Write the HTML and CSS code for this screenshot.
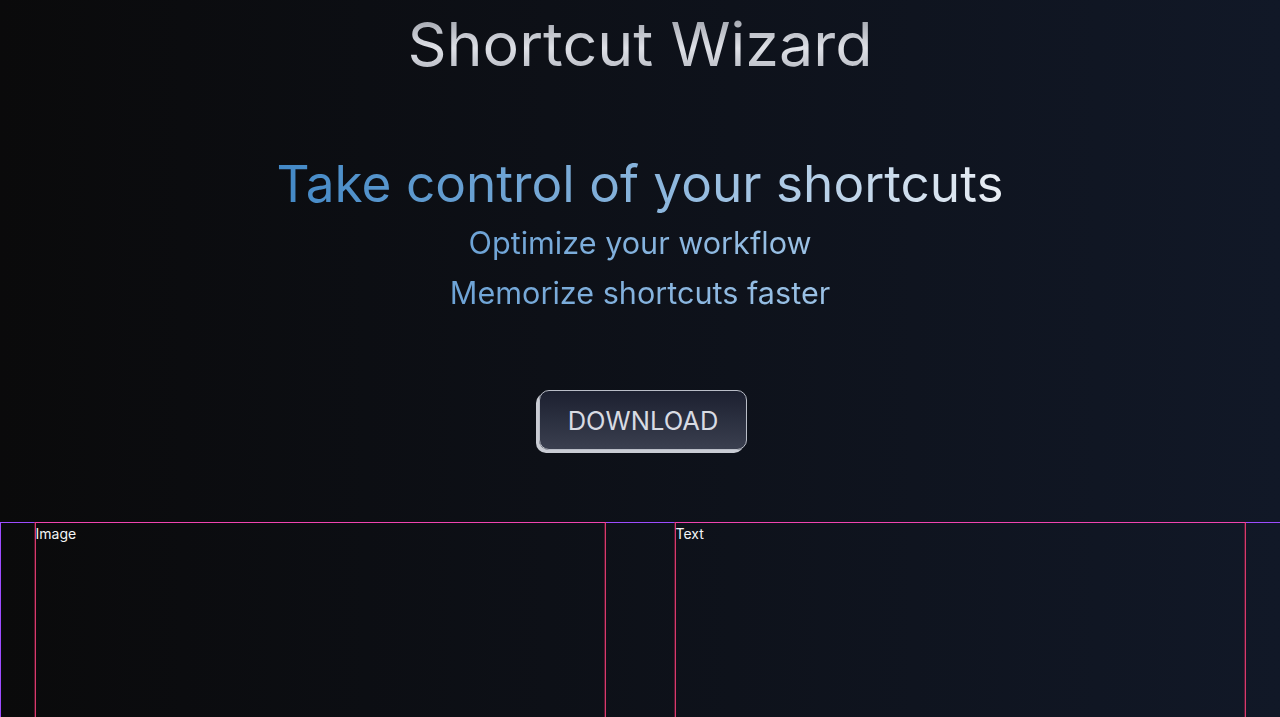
FILE: index.html
```html
<!DOCTYPE html>
<html lang="en">
<head>
<meta charset="utf-8">
<title>Shortcut Wizard</title>
<link rel="stylesheet" href="styles.css">
</head>
<body>
<main class="page">
  <header class="hero">
    <h1 class="title">Shortcut Wizard</h1>
    <h2 class="tagline">Take control of your shortcuts</h2>
    <p class="sub">Optimize your workflow</p>
    <p class="sub">Memorize shortcuts faster</p>
    <button class="download" type="button">DOWNLOAD</button>
  </header>
  <section class="split">
    <div class="col">Image</div>
    <div class="col">Text</div>
  </section>
</main>
</body>
</html>
```

FILE: styles.css
```css
* { box-sizing: border-box; }
html, body {
  margin: 0;
  padding: 0;
  height: 100%;
}
body {
  background: linear-gradient(to right, #0a0a0b, #111827);
  font-family: Inter, "Noto Sans", "Liberation Sans", sans-serif;
  color: #fff;
  overflow: hidden;
}
.page {
  display: flex;
  flex-direction: column;
  height: 100vh;
}
.hero {
  display: flex;
  flex-direction: column;
  align-items: center;
  padding-top: 7px;
}
.title {
  margin: 0;
  font-size: 61px;
  line-height: 75px;
  font-weight: 400;
  background: linear-gradient(to bottom, #8b8f99, #dfe1e7 55%, #a5a9b3);
  -webkit-background-clip: text;
  background-clip: text;
  color: transparent;
}
.tagline {
  margin: 71px 0 0;
  font-size: 51.3px;
  line-height: 60px;
  font-weight: 400;
  background: linear-gradient(to right, #4288c6, #8fb8de 55%, #eaeef4);
  -webkit-background-clip: text;
  background-clip: text;
  color: transparent;
}
.sub {
  margin: 0;
  font-size: 30.6px;
  line-height: 50px;
  font-weight: 400;
  background: linear-gradient(to right, #6da3d6, #9cc2e6);
  -webkit-background-clip: text;
  background-clip: text;
  color: transparent;
}
.tagline + .sub { margin-top: 5px; }
.download {
  margin: 72px 0 0 6px;
  height: 60px;
  padding: 0 28px;
  font-family: inherit;
  font-size: 25.5px;
  font-weight: 400;
  color: #d8dbe3;
  border: 1px solid #b9bdc7;
  border-radius: 10px;
  background: linear-gradient(to bottom, #1c2030, #3a3f4f);
  box-shadow: -3px 3px 0 #c9ccd4;
  cursor: pointer;
}
.split {
  margin-top: 72px;
  flex: 1;
  min-height: 0;
  display: grid;
  grid-template-columns: 571px 571px;
  column-gap: 69px;
  justify-content: center;
  box-shadow: inset 0 1px 0 #9d4cff, inset 1px 0 0 #9d4cff;
}
.col {
  border: 1px solid #d83a6c;
  border-top-color: #f044b0;
  border-bottom: none;
  box-shadow: -1px 0 0 rgba(170, 30, 80, 0.45), inset -1px 0 0 rgba(170, 30, 80, 0.45);
  font-size: 14px;
  line-height: 21px;
  color: #f3f4f6;
}
```
